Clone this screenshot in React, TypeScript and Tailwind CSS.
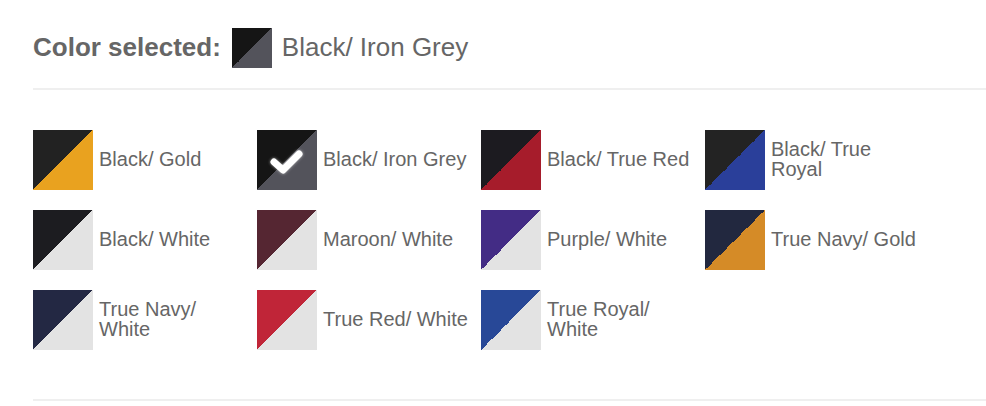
const COLORS = [
  { name: "Black/ Gold", a: "#222222", b: "#e9a21f" },
  { name: "Black/ Iron Grey", a: "#151515", b: "#53535b", selected: true },
  { name: "Black/ True Red", a: "#1c1b20", b: "#a61c2b" },
  { name: "Black/ True Royal", a: "#232323", b: "#2a3f9a" },
  { name: "Black/ White", a: "#1c1c20", b: "#e3e3e3" },
  { name: "Maroon/ White", a: "#552632", b: "#e3e3e3" },
  { name: "Purple/ White", a: "#432c85", b: "#e3e3e3" },
  { name: "True Navy/ Gold", a: "#22283f", b: "#d58b27" },
  { name: "True Navy/ White", a: "#232843", b: "#e3e3e3" },
  { name: "True Red/ White", a: "#c02538", b: "#e3e3e3" },
  { name: "True Royal/ White", a: "#284897", b: "#e3e3e3" },
];

function Swatch({ a, b, size, children }: { a: string; b: string; size: string; children?: React.ReactNode }) {
  return (
    <div
      className={`relative shrink-0 ${size}`}
      style={{ background: `linear-gradient(to bottom right, ${a} 50%, ${b} 50%)` }}
    >
      {children}
    </div>
  );
}

function Check() {
  return (
    <svg
      viewBox="0 0 60 60"
      className="absolute inset-0 h-full w-full"
      style={{ filter: "drop-shadow(0 0 1.5px rgba(255,255,255,0.6))" }}
    >
      <polyline
        points="17,32 26,40 42,24"
        fill="none"
        stroke="#ffffff"
        strokeWidth="7"
        strokeLinecap="round"
        strokeLinejoin="round"
      />
    </svg>
  );
}

export default function App() {
  const selected = COLORS.find((c) => c.selected)!;
  return (
    <div className="min-h-screen bg-white pl-[33px] pt-[28px] font-['Liberation_Sans',Arial,sans-serif] text-[#666666]">
      <div className="flex h-10 items-center">
        <span className="mb-[2px] text-[26px] font-bold leading-none">Color selected:</span>
        <div className="ml-[11px]">
          <Swatch a={selected.a} b={selected.b} size="h-10 w-10" />
        </div>
        <span className="mb-[2px] ml-[10px] text-[26px] leading-none">{selected.name}</span>
      </div>

      <div className="mt-[20px] h-[2px] bg-[#efefef]" />

      <div className="mt-[40px] grid grid-cols-[repeat(4,224px)] gap-y-5">
        {COLORS.map((c) => (
          <div key={c.name} className="flex items-center">
            <Swatch a={c.a} b={c.b} size="h-[60px] w-[60px]">
              {c.selected && <Check />}
            </Swatch>
            <span className="mb-[2px] ml-[6px] w-[150px] text-[20px] leading-[20px]">{c.name}</span>
          </div>
        ))}
      </div>

      <div className="mt-[49px] h-[2px] bg-[#efefef]" />
    </div>
  );
}
